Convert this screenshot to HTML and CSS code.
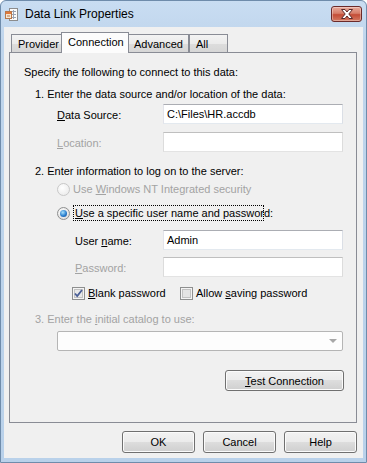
FILE: index.html
```html
<!DOCTYPE html>
<html lang="en">
<head>
    <meta charset="UTF-8">
    <title>Data Link Properties</title>
    <link rel="stylesheet" href="styles.css">
</head>
<body>
    <div class="window">
        <!-- 标题栏 -->
        <div class="titlebar">
            <svg class="app-icon" width="14" height="14" viewBox="0 0 14 14">
                <rect x="4.5" y="0.5" width="8" height="12" fill="#fbfbfb" stroke="#8c8c8c"/>
                <line x1="6" y1="3.5" x2="11" y2="3.5" stroke="#9aa4b4"/>
                <line x1="6" y1="6.5" x2="11" y2="6.5" stroke="#9aa4b4"/>
                <line x1="6" y1="9.5" x2="11" y2="9.5" stroke="#9aa4b4"/>
                <line x1="8.5" y1="2" x2="8.5" y2="11" stroke="#9aa4b4"/>
                <rect x="0.5" y="3.5" width="6" height="7" fill="#f6e7d2" stroke="#b8774a"/>
                <rect x="1" y="4" width="5" height="2" fill="#e0783a"/>
                <line x1="2" y1="8" x2="5" y2="8" stroke="#b8774a"/>
            </svg>
            <span class="title">Data Link Properties</span>
            <div class="close-btn">
                <svg width="14" height="10" viewBox="0 0 14 10">
                    <path d="M1.5 0.5 H5 L7 3 L9 0.5 H12.5 L8.8 5 L12.5 9.5 H9 L7 7 L5 9.5 H1.5 L5.2 5 Z" fill="#fff" stroke="#5a2a2a" stroke-width="1"/>
                </svg>
            </div>
        </div>

        <div class="client">
            <!-- 选项卡 -->
            <div class="tabs">
                <div class="tab tab-provider">Provider</div>
                <div class="tab selected">Connection</div>
                <div class="tab tab-advanced">Advanced</div>
                <div class="tab tab-all">All</div>
            </div>

            <div class="panel">
                <div class="line row-specify">Specify the following to connect to this data:</div>
                <div class="line step row-step1">1. Enter the data source and/or location of the data:</div>

                <div class="field row-ds">
                    <span class="field-label"><u>D</u>ata Source:</span>
                    <div class="input">C:\Files\HR.accdb</div>
                </div>
                <div class="field row-loc">
                    <span class="field-label disabled"><u>L</u>ocation:</span>
                    <div class="input input-disabled"></div>
                </div>

                <div class="line step row-step2">2. Enter information to log on to the server:</div>

                <div class="option row-radio1 disabled">
                    <span class="radio radio-disabled"></span>
                    <span>Use <u>W</u>indows NT Integrated security</span>
                </div>
                <div class="option row-radio2">
                    <span class="radio radio-on"></span>
                    <span class="focus"><u>U</u>se a specific user name and password:</span>
                </div>

                <div class="field sub row-user">
                    <span class="field-label sub-label">User <u>n</u>ame:</span>
                    <div class="input">Admin</div>
                </div>
                <div class="field sub row-pwd">
                    <span class="field-label sub-label disabled"><u>P</u>assword:</span>
                    <div class="input input-disabled"></div>
                </div>

                <div class="checks row-checks">
                    <label class="check-item check-first">
                        <svg class="checkbox" width="13" height="13" viewBox="0 0 13 13">
                            <rect x="0.5" y="0.5" width="12" height="12" fill="#f4f4f4" stroke="#8e8f8f"/>
                            <rect x="2.5" y="2.5" width="8" height="8" fill="#e8e8e8" stroke="#c2c2c2"/>
                            <path d="M3 6.5 L5.2 9 L10 3" fill="none" stroke="#4a5f97" stroke-width="1.8"/>
                        </svg>
                        <span><u>B</u>lank password</span>
                    </label>
                    <label class="check-item">
                        <svg class="checkbox" width="13" height="13" viewBox="0 0 13 13">
                            <rect x="0.5" y="0.5" width="12" height="12" fill="#f4f4f4" stroke="#8e8f8f"/>
                            <rect x="2.5" y="2.5" width="8" height="8" fill="#e4e4e4" stroke="#c2c2c2"/>
                        </svg>
                        <span>Allow <u>s</u>aving password</span>
                    </label>
                </div>

                <div class="line step row-step3 disabled">3. Enter the <u>i</u>nitial catalog to use:</div>
                <div class="combo row-combo">
                    <span class="combo-arrow"></span>
                </div>

                <div class="test-row">
                    <button class="btn btn-test"><u>T</u>est Connection</button>
                </div>
            </div>

            <!-- 底部按钮 -->
            <div class="buttons">
                <button class="btn">OK</button>
                <button class="btn">Cancel</button>
                <button class="btn">Help</button>
            </div>
        </div>
    </div>
</body>
</html>
```

FILE: styles.css
```css
/* 全局样式 */
body {
    margin: 0;
    font-family: 'Liberation Sans', Arial, sans-serif;
    font-size: 11px;
    color: #000;
}

/* 窗口外框 */
.window {
    width: 367px;
    height: 463px;
    box-sizing: border-box;
    border: 1px solid #6f8cab;
    border-radius: 6px 6px 0 0;
    padding: 0 3px 4px 3px;
    background: linear-gradient(#c9ddf2, #bfd5ec 40px, #b9d1ea);
    display: flex;
    flex-direction: column;
}

/* 标题栏 */
.titlebar {
    height: 26px;
    display: flex;
    align-items: center;
}

.app-icon {
    margin-left: 1px;
    margin-top: 1px;
}

.title {
    margin-left: 6px;
    font-size: 12px;
    color: #000;
    flex: 1;
}

.close-btn {
    align-self: flex-start;
    margin-top: 5px;
    margin-right: 1px;
    width: 31px;
    height: 16px;
    box-sizing: border-box;
    border: 1px solid #6b2a2a;
    border-radius: 3px;
    background: linear-gradient(#e8aa9c 0%, #d77e69 45%, #c44c36 55%, #d47a62 100%);
    box-shadow: inset 0 0 0 1px rgba(255, 255, 255, 0.35);
    display: flex;
    align-items: center;
    justify-content: center;
}

/* 客户区 */
.client {
    flex: 1;
    background: #f0f0f0;
    padding: 5px 6px 0 5px;
    display: flex;
    flex-direction: column;
}

/* 选项卡 */
.tabs {
    height: 20px;
    display: flex;
    align-items: flex-end;
    padding-left: 2px;
    position: relative;
    z-index: 1;
}

.tab {
    height: 18px;
    box-sizing: border-box;
    border: 1px solid #898c95;
    border-bottom: none;
    background: linear-gradient(#f3f3f3, #ebebeb 50%, #dddddd 50%, #d6d6d6);
    padding-left: 6px;
    line-height: 18px;
    white-space: nowrap;
}

.tab-provider {
    width: 50px;
    border-right: none;
}

.tab.selected {
    width: 68px;
    height: 21px;
    margin-bottom: -1px;
    background: #fcfcfc;
    padding-left: 6px;
    line-height: 18px;
}

.tab-advanced {
    width: 60px;
    border-left: none;
    padding-left: 5px;
}

.tab-all {
    width: 39px;
    border-left: 1px solid #898c95;
}

/* 选项卡页面 */
.panel {
    height: 371px;
    box-sizing: border-box;
    border: 1px solid #898c95;
    background: #f0f0f0;
    padding: 12px 12px 0 14px;
    display: flex;
    flex-direction: column;
}

.line {
    height: 14px;
    line-height: 14px;
    white-space: nowrap;
}

.step {
    margin-left: 11px;
}

.disabled {
    color: #a3a3a3;
}

/* 字段行 */
.field {
    height: 20px;
    display: flex;
    align-items: center;
    margin-left: 33px;
}

.field-label {
    width: 106px;
    padding-top: 2px;
}

.field.sub {
    margin-left: 51px;
}

.sub-label {
    width: 88px;
}

.input {
    width: 180px;
    height: 20px;
    box-sizing: border-box;
    border: 1px solid;
    border-color: #abadb3 #dbdfe6 #e3e9ef #e2e3ea;
    background: #fff;
    padding-left: 3px;
    line-height: 18px;
}

.input-disabled {
    border-color: #bfbfbf #dcdcdc #e3e3e3 #dcdcdc;
}

/* 单选按钮 */
.option {
    display: flex;
    align-items: center;
    margin-left: 33px;
    white-space: nowrap;
}

.radio {
    width: 13px;
    height: 13px;
    box-sizing: border-box;
    border-radius: 50%;
    border: 1px solid #8e8f8f;
    background: radial-gradient(circle at 40% 35%, #ffffff, #e2e2e2 70%);
    margin-right: 3px;
    flex-shrink: 0;
    position: relative;
}

.radio-disabled {
    border-color: #c8c8c8;
    background: radial-gradient(circle at 40% 35%, #ffffff, #eeeeee 70%);
}

.radio-on::after {
    content: '';
    position: absolute;
    left: 2px;
    top: 2px;
    width: 7px;
    height: 7px;
    border-radius: 50%;
    background: radial-gradient(circle at 40% 35%, #a9e1fb, #2a7fcf 55%, #10458c);
}

.focus {
    border: 1px dotted #000;
    padding: 0 1px;
    height: 14px;
    line-height: 14px;
    width: 187px;
}

/* 复选框 */
.checks {
    height: 14px;
    display: flex;
    align-items: center;
    margin-left: 48px;
    white-space: nowrap;
}

.check-item {
    display: flex;
    align-items: center;
}

.check-first {
    width: 108px;
}

.checkbox {
    margin-right: 3px;
    flex-shrink: 0;
}

/* 下拉框 */
.combo {
    width: 286px;
    height: 20px;
    box-sizing: border-box;
    margin-left: 33px;
    border: 1px solid #b5b5b5;
    border-radius: 2px;
    background: #fdfdfd;
    display: flex;
    align-items: center;
    justify-content: flex-end;
    padding-right: 5px;
}

.combo-arrow {
    width: 0;
    height: 0;
    border-left: 4px solid transparent;
    border-right: 4px solid transparent;
    border-top: 4px solid #a7a7a7;
}

/* 行间距 */
.row-step1 { margin-top: 8px; }
.row-ds { margin-top: 3px; }
.row-loc { margin-top: 8px; }
.row-step2 { margin-top: 12px; }
.row-radio1 { margin-top: 4px; height: 14px; }
.row-radio2 { margin-top: 9px; height: 16px; }
.row-user { margin-top: 9px; }
.row-pwd { margin-top: 7px; }
.row-checks { margin-top: 9px; }
.row-step3 { margin-top: 12px; }
.row-combo { margin-top: 5px; }

/* 测试按钮 */
.test-row {
    margin-top: 19px;
    display: flex;
    justify-content: flex-end;
}

/* 按钮样式 */
.btn {
    width: 73px;
    height: 22px;
    box-sizing: border-box;
    border: 1px solid #707070;
    border-radius: 3px;
    background: linear-gradient(#f2f2f2 0%, #ebebeb 50%, #dddddd 50%, #cfcfcf 100%);
    box-shadow: inset 0 0 0 1px #fbfbfb;
    font-family: 'Liberation Sans', Arial, sans-serif;
    font-size: 11px;
    color: #000;
    padding: 0;
}

.btn-test {
    width: 119px;
    height: 21px;
}

.buttons {
    margin-top: 8px;
    display: flex;
    justify-content: flex-end;
    gap: 8px;
}
```
